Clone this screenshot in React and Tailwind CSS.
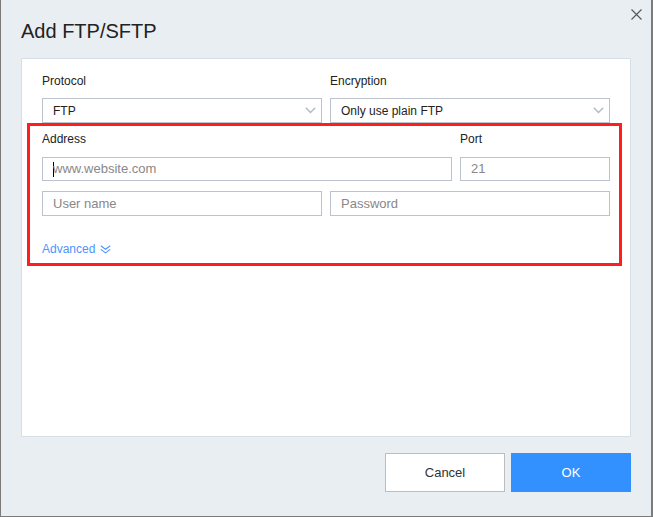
import React from "react";

const font = { fontFamily: '"Liberation Sans", Arial, sans-serif' };

function Chevron() {
  return (
    <svg width="11" height="7" viewBox="0 0 11 7" className="shrink-0">
      <polyline points="0.8,0.8 5.5,5.6 10.2,0.8" fill="none" stroke="#b3b9c2" strokeWidth="1.4" />
    </svg>
  );
}

function Select({ value }) {
  return (
    <div className="h-[25px] border border-[#bcc3cc] bg-white flex items-center justify-between pl-[10px] pr-[5px] text-[12px] text-[#222]">
      <span>{value}</span>
      <Chevron />
    </div>
  );
}

function Field({ placeholder, caret, className = "" }) {
  return (
    <div className={"border border-[#bcc3cc] bg-white flex items-center pl-[10px] text-[13px] text-[#888] " + className}>
      {caret && <span className="w-px h-[15px] bg-black -mr-px" />}
      <span>{placeholder}</span>
    </div>
  );
}

export default function App() {
  return (
    <div
      className="w-[653px] h-[517px] bg-[#e9eef3] border-l border-r-2 border-b border-[#7b7b7b] flex flex-col"
      style={font}
    >
      {/* Header */}
      <div className="h-[58px] flex justify-between items-start">
        <h1 className="mt-[19px] ml-[20px] text-[20px] leading-[24px] text-[#222]">Add FTP/SFTP</h1>
        <button className="mt-[9px] mr-[9px]">
          <svg width="11" height="11" viewBox="0 0 11 11">
            <path d="M0.5 0.5 L10.5 10.5 M10.5 0.5 L0.5 10.5" stroke="#555" strokeWidth="1.1" />
          </svg>
        </button>
      </div>

      {/* Body panel */}
      <div className="ml-[20px] w-[610px] h-[379px] bg-white border border-[#d8dee6] px-[20px] pt-[15px]">
        <div className="grid grid-cols-2 gap-x-[8px] w-[568px]">
          <div>
            <div className="text-[12px] leading-[14px] text-[#222]">Protocol</div>
            <div className="mt-[10px]">
              <Select value="FTP" />
            </div>
          </div>
          <div>
            <div className="text-[12px] leading-[14px] text-[#222]">Encryption</div>
            <div className="mt-[10px]">
              <Select value="Only use plain FTP" />
            </div>
          </div>
        </div>

        <div className="-ml-[15px] w-[595px] border-[3px] border-[#ff1e1e] pl-[12px] pr-[9px] pt-[6px] pb-[7px]">
          <div className="flex gap-[8px]">
            <div className="w-[410px]">
              <div className="text-[12px] leading-[14px] text-[#222]">Address</div>
              <Field placeholder="www.website.com" caret className="mt-[11px] h-[24px]" />
            </div>
            <div className="w-[150px]">
              <div className="text-[12px] leading-[14px] text-[#222]">Port</div>
              <Field placeholder="21" className="mt-[11px] h-[24px]" />
            </div>
          </div>
          <div className="grid grid-cols-2 gap-x-[8px] mt-[10px]">
            <Field placeholder="User name" className="h-[25px]" />
            <Field placeholder="Password" className="h-[25px]" />
          </div>
          <button className="mt-[26px] flex items-center gap-[5px] text-[12px] leading-[14px] text-[#4d94ff]">
            <span>Advanced</span>
            <svg width="11" height="9" viewBox="0 0 11 9">
              <polyline points="0.8,0.8 5.5,4.3 10.2,0.8" fill="none" stroke="#4d94ff" strokeWidth="1.1" />
              <polyline points="0.8,4.4 5.5,7.9 10.2,4.4" fill="none" stroke="#4d94ff" strokeWidth="1.1" />
            </svg>
          </button>
        </div>
      </div>

      {/* Footer */}
      <div className="flex justify-end gap-[6px] mt-[16px] mr-[20px]">
        <button className="w-[120px] h-[39px] bg-white border border-[#bdbdbd] text-[13px] text-[#333]">
          Cancel
        </button>
        <button className="w-[120px] h-[39px] bg-[#3391ff] text-[13px] text-white">OK</button>
      </div>
    </div>
  );
}
